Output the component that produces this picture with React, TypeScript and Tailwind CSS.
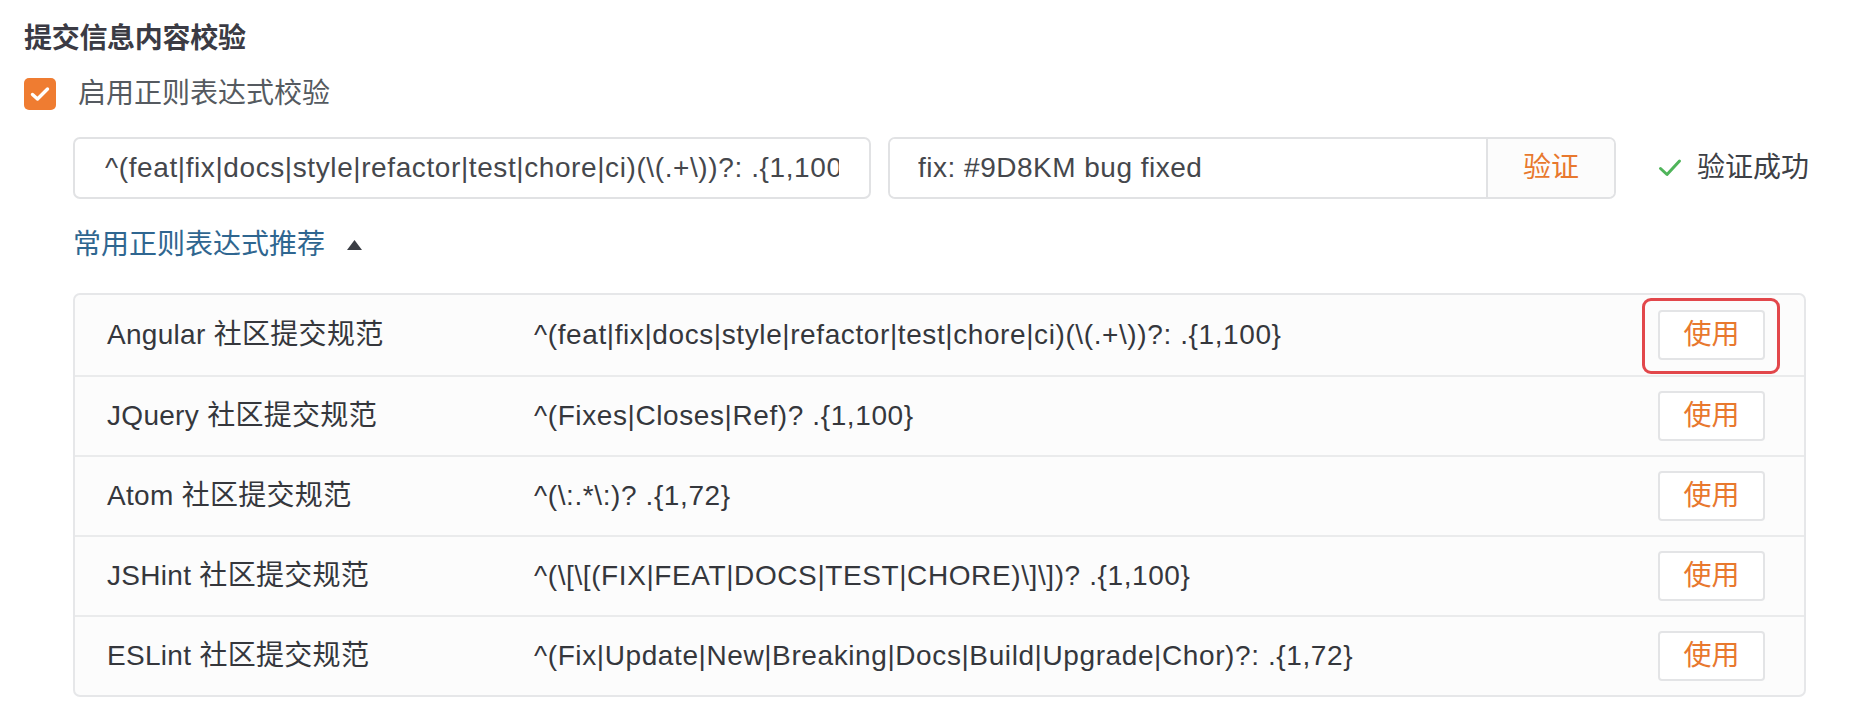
import React from "react";

const FONT = '"Liberation Sans", "Noto Sans CJK SC", sans-serif';

const presets = [
  { name: "Angular 社区提交规范", regex: "^(feat|fix|docs|style|refactor|test|chore|ci)(\\(.+\\))?: .{1,100}" },
  { name: "JQuery 社区提交规范", regex: "^(Fixes|Closes|Ref)? .{1,100}" },
  { name: "Atom 社区提交规范", regex: "^(\\:.*\\:)? .{1,72}" },
  { name: "JSHint 社区提交规范", regex: "^(\\[\\[(FIX|FEAT|DOCS|TEST|CHORE)\\]\\])? .{1,100}" },
  { name: "ESLint 社区提交规范", regex: "^(Fix|Update|New|Breaking|Docs|Build|Upgrade|Chor)?: .{1,72}" },
];

function CheckBox() {
  return (
    <div className="w-8 h-8 rounded-[5px] bg-[#ef7c31] flex items-center justify-center">
      <svg width="20" height="16" viewBox="0 0 20 16" fill="none">
        <path d="M2.5 8.5 L7.5 13 L17.5 3" stroke="#fff" strokeWidth="3.4" strokeLinecap="round" strokeLinejoin="round" />
      </svg>
    </div>
  );
}

export default function App() {
  return (
    <div className="w-[1868px] h-[722px] bg-white pl-6 pt-[19px] text-[28px]" style={{ fontFamily: FONT }}>
      {/* Section title */}
      <div className="h-10 leading-10 font-bold text-[#3b3b44] tracking-[-0.3px]">提交信息内容校验</div>

      {/* Enable checkbox */}
      <div className="mt-[19px] flex items-center gap-[22px] h-8">
        <CheckBox />
        <span className="text-[#555a60] leading-8">启用正则表达式校验</span>
      </div>

      <div className="ml-[49px]">
        {/* Inputs */}
        <div className="mt-[27px] flex items-center h-[62px]">
          <input
            readOnly
            value={presets[0].regex}
            className="w-[798px] h-[62px] border-2 border-[#e1e2e4] rounded-[7px] px-[30px] text-[#45474c] tracking-[0.6px] outline-none bg-white"
          />
          <div className="ml-[17px] w-[728px] h-[62px] border-2 border-[#e1e2e4] rounded-[7px] flex overflow-hidden">
            <input
              readOnly
              value="fix: #9D8KM bug fixed"
              className="flex-1 min-w-0 px-[28px] text-[#45474c] tracking-[0.5px] outline-none bg-white"
            />
            <button className="w-[128px] border-l-2 border-[#e1e2e4] bg-[#fcfcfc] text-[#e8782e]">验证</button>
          </div>
          <div className="ml-[42px] flex items-center gap-[15px]">
            <svg width="24" height="20" viewBox="0 0 24 20" fill="none">
              <path d="M2.5 10.5 L9 16.5 L21.5 3" stroke="#4fb45a" strokeWidth="3" strokeLinecap="round" strokeLinejoin="round" />
            </svg>
            <span className="text-[#3d4046]">验证成功</span>
          </div>
        </div>

        {/* Preset toggle */}
        <div className="mt-[26px] h-10 flex items-center gap-[22px]">
          <span className="text-[#2f6690] leading-10">常用正则表达式推荐</span>
          <svg width="15" height="10" viewBox="0 0 15 10">
            <polygon points="7.5,0 15,10 0,10" fill="#3a3d44" />
          </svg>
        </div>

        {/* Preset table */}
        <div className="mt-[28px] w-[1733px] border-2 border-[#e6e7e9] rounded-[7px] bg-[#fcfcfc]">
          {presets.map((p, i) => (
            <div
              key={i}
              className={`grid grid-cols-[427px_1fr_auto] items-center h-[80px] pl-[32px] pr-[39px] ${
                i > 0 ? "border-t-2 border-[#eaebec]" : ""
              }`}
            >
              <span className="text-[#35373c] whitespace-nowrap tracking-[0.3px]">{p.name}</span>
              <span className="text-[#35373c] whitespace-nowrap tracking-[0.6px]">{p.regex}</span>
              <div className="relative">
                {i === 0 && (
                  <div className="absolute -left-4 -right-[15px] -top-3 -bottom-[14px] border-[3px] border-[#e2474b] rounded-[9px]" />
                )}
                <button className="w-[107px] h-[50px] bg-white border-2 border-[#e3e4e6] rounded-[4px] text-[#e8782e]">
                  使用
                </button>
              </div>
            </div>
          ))}
        </div>
      </div>
    </div>
  );
}
